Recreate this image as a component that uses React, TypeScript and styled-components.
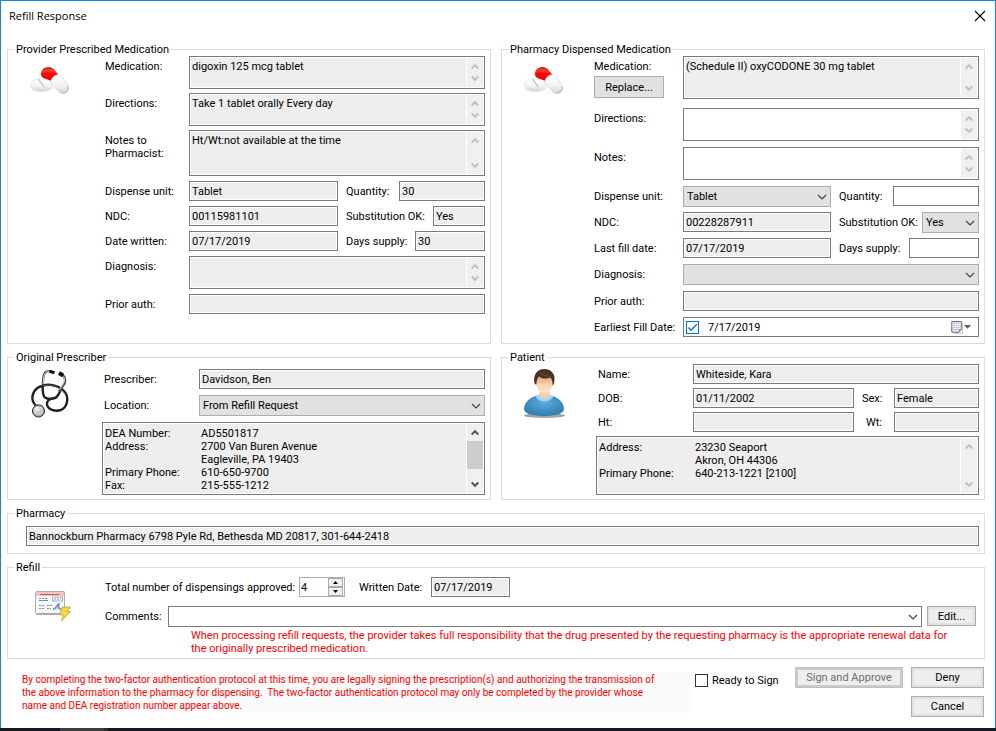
import React, { useId, useState } from "react";
import styled, { createGlobalStyle, css } from "styled-components";

const GlobalStyle = createGlobalStyle`
  *, *::before, *::after { box-sizing: border-box; }
  body { margin: 0; background: #fff; }
  body, input, select, textarea, button {
    font-family: Roboto, "Liberation Sans", Arial, sans-serif;
    font-size: 11px;
    line-height: 13px;
    color: #000;
  }
`;

const BORDER = "#7a7a7a";
const READONLY = "#eeeeee";

/* ---------- window frame ---------- */

const Page = styled.div`
  min-height: 100vh;
  display: flex;
  flex-direction: column;
`;

const Window = styled.main`
  flex: 1;
  display: flex;
  flex-direction: column;
  background: #fff;
  border: 1px solid #1883d7;
  border-bottom: 0;
`;

const TitleBar = styled.header`
  display: flex;
  align-items: center;
  justify-content: space-between;
  height: 30px;
  padding: 0 9px 0 8px;
`;

const Title = styled.h1`
  margin: 0;
  font: 400 11px/16px "Open Sans", "Noto Sans", sans-serif;
`;

const CloseButton = styled.button`
  display: flex;
  padding: 0;
  border: 0;
  background: none;
`;

const Taskbar = styled.div`
  display: flex;
  height: 3px;
  padding-left: 60px;
  background: #15181d;
`;

const TaskbarItem = styled.div`
  width: 48px;
  background: #3b3d41;
  border-right: 4px solid #2a2c30;
`;

const Body = styled.form`
  display: flex;
  flex-direction: column;
  gap: 7px;
  padding: 12px 10px 0 6px;
`;

const Columns = styled.div`
  display: grid;
  grid-template-columns: minmax(0, 1fr) minmax(0, 1fr);
  gap: 10px;
`;

/* ---------- groups and rows ---------- */

const Group = styled.fieldset<{ $pad?: string }>`
  min-width: 0;
  margin: 0;
  padding: ${(p) => p.$pad ?? "0 5px 4px 0"};
  border: 1px solid #dcdcdc;
`;

const Legend = styled.legend`
  margin-left: 6px;
  padding: 0 2px;
  line-height: 13px;
`;

const WithIcon = styled.div<{ $icon: number }>`
  display: grid;
  grid-template-columns: ${(p) => p.$icon}px minmax(0, 1fr);
`;

const IconCell = styled.div<{ $top: number }>`
  padding: ${(p) => p.$top}px 0 0 22px;
  svg { display: block; }
`;

const Stack = styled.div<{ $gap: number }>`
  display: flex;
  flex-direction: column;
  gap: ${(p) => p.$gap}px;
`;

const Row = styled.div<{ $label: number }>`
  display: grid;
  grid-template-columns: ${(p) => p.$label}px minmax(0, 1fr);
`;

const Split = styled.div<{ $side: number; $gap?: number }>`
  display: grid;
  grid-template-columns: minmax(0, 1fr) ${(p) => p.$side}px;
  column-gap: ${(p) => p.$gap ?? 8}px;
`;

const Pair = styled.div<{ $label: number }>`
  display: grid;
  grid-template-columns: ${(p) => p.$label}px minmax(0, 1fr);
`;

const Label = styled.label<{ $indent?: number }>`
  padding-top: 4px;
  padding-left: ${(p) => p.$indent ?? 0}px;
  white-space: nowrap;
`;

const LabelWithButton = styled.div`
  display: flex;
  flex-direction: column;
  align-items: flex-start;
  gap: 3px;
`;

const InlineRow = styled.div`
  display: flex;
  align-items: flex-start;
`;

const PharmacyField = styled.div`
  padding-left: 18px;
`;

/* ---------- controls ---------- */

const frame = css<{ $editable?: boolean }>`
  border: 1px solid ${BORDER};
  background: ${(p) => (p.$editable ? "#fff" : READONLY)};
  box-shadow: inset 0 0 0 1px #fff;
`;

const Input = styled.input<{ $editable?: boolean; $width?: number }>`
  ${frame}
  width: ${(p) => (p.$width ? `${p.$width}px` : "100%")};
  height: 20px;
  padding: 0 2px;
  border-radius: 0;
  outline: 0;
`;

const ScrollFrame = styled.div<{ $editable?: boolean; $height: number }>`
  ${frame}
  display: flex;
  height: ${(p) => p.$height}px;
  padding: 1px;
`;

const TextArea = styled.textarea`
  flex: 1;
  min-width: 0;
  padding: 2px 1px;
  border: 0;
  outline: 0;
  background: transparent;
  resize: none;
  overflow: hidden;
`;

const Scrollbar = styled.div`
  flex: none;
  display: flex;
  flex-direction: column;
  justify-content: space-between;
  align-items: center;
  width: 17px;
  padding: 5px 0;
  border-left: 1px solid #fff;
  background: #f0f0f0;
  svg { display: block; flex: none; }
`;

const Thumb = styled.div`
  width: 16px;
  height: 28px;
  margin: 0 0 8px;
  background: #cdcdcd;
`;

const SelectBox = styled.div`
  display: grid;
  flex: 1;
  min-width: 0;
  align-items: center;
  > * { grid-area: 1 / 1; }
  > svg { justify-self: end; margin-right: 4px; pointer-events: none; }
`;

const Select = styled.select<{ $editable?: boolean }>`
  appearance: none;
  width: 100%;
  height: 21px;
  padding: 0 20px 0 3px;
  border: 1px solid ${(p) => (p.$editable ? BORDER : "#adadad")};
  border-radius: 0;
  outline: 0;
  background: ${(p) => (p.$editable ? "#fff" : "#e1e1e1")};
`;

const Button = styled.button<{ $width?: number; $height: number; $framed?: boolean }>`
  width: ${(p) => p.$width}px;
  height: ${(p) => p.$height}px;
  padding: 0;
  border: 1px solid #adadad;
  border-radius: 0;
  background: ${(p) => (p.$framed ? "#eeeeee" : "#e1e1e1")};
  box-shadow: ${(p) => (p.$framed ? "inset 0 0 0 2px #e1e1e1" : "none")};
  white-space: nowrap;
  &:disabled {
    color: #6d6d6d;
    border-color: #bfbfbf;
    box-shadow: inset 0 0 0 2px #cccccc;
  }
`;

const CheckWrap = styled.span`
  display: grid;
  flex: none;
  place-items: center;
  > * { grid-area: 1 / 1; }
  > svg { pointer-events: none; }
`;

const CheckInput = styled.input<{ $color: string }>`
  appearance: none;
  width: 13px;
  height: 13px;
  margin: 0;
  border: 1px solid ${(p) => p.$color};
  background: #fff;
`;

const DateFrame = styled.div`
  display: flex;
  align-items: center;
  height: 20px;
  padding: 0 6px 0 2px;
  border: 1px solid ${BORDER};
  background: #fff;
`;

const DateInput = styled.input`
  flex: 1;
  min-width: 0;
  padding: 0 0 0 9px;
  border: 0;
  outline: 0;
  background: transparent;
`;

const DropButton = styled.button`
  display: flex;
  padding: 0;
  border: 0;
  background: none;
`;

const Spinner = styled.div`
  display: flex;
  width: 46px;
  height: 20px;
  padding-right: 1px;
  border: 1px solid #abadb3;
  background: #fff;
`;

const NumberInput = styled.input`
  flex: 1;
  min-width: 0;
  padding: 0 1px;
  border: 0;
  outline: 0;
  background: transparent;
  appearance: textfield;
  &::-webkit-inner-spin-button { appearance: none; margin: 0; }
`;

const SpinButtons = styled.div`
  display: grid;
  grid-template-rows: 1fr 1fr;
  width: 15px;
`;

const SpinButton = styled.button`
  display: flex;
  align-items: center;
  justify-content: center;
  padding: 0;
  border: 1px solid #acacac;
  background: #f0f0f0;
`;

const Details = styled.dl`
  flex: 1;
  display: grid;
  grid-template-columns: 96px minmax(0, 1fr);
  align-content: start;
  margin: 0;
  padding: 3px 1px 0;
  dd { margin: 0; }
`;

const Notice = styled.p<{ $indent?: number }>`
  margin: 0;
  padding: 2px 0 0 ${(p) => p.$indent ?? 0}px;
  color: #ff0000;
  white-space: nowrap;
`;

const LegalNotice = styled(Notice)`
  padding: 1px;
  font-size: 10px;
`;

const Footer = styled.footer`
  display: flex;
  align-items: flex-start;
  padding: 1px 1px 10px 14px;
`;

const Legal = styled.div`
  flex: 1;
  min-width: 0;
  margin-top: 5px;
  background: #fafafa;
`;

const ReadyLabel = styled.label`
  display: flex;
  align-items: center;
  gap: 4px;
  width: 100px;
  margin: 7px 0 0 6px;
  white-space: nowrap;
`;

const Actions = styled.div`
  display: grid;
  grid-template-columns: auto auto;
  gap: 8px;
  > :last-child { grid-column: 2; }
`;

/* ---------- drawings ---------- */

const CloseIcon = () => (
  <svg width="12" height="12" viewBox="0 0 12 12" aria-hidden="true">
    <path d="M1 1 11 11M11 1 1 11" stroke="#000" strokeWidth="1.1" fill="none" />
  </svg>
);

const Chevron = () => (
  <svg width="10" height="6" viewBox="0 0 10 6" aria-hidden="true">
    <path d="M1 1 5 5 9 1" stroke="#444" strokeWidth="1.2" fill="none" />
  </svg>
);

const ScrollArrow = ({ down, active }: { down?: boolean; active?: boolean }) => (
  <svg width="8" height="7" viewBox="0 0 8 7" aria-hidden="true">
    <path
      d={down ? "M0.7 1.5 4 4.8 7.3 1.5" : "M0.7 5.5 4 2.2 7.3 5.5"}
      stroke={active ? "#555" : "#bfbfbf"}
      strokeWidth="2"
      fill="none"
    />
  </svg>
);

const Tick = ({ color }: { color: string }) => (
  <svg width="13" height="13" viewBox="0 0 13 13" aria-hidden="true">
    <path d="M2.5 6.5 5 9.2 10.8 3.2" stroke={color} strokeWidth="1.4" fill="none" />
  </svg>
);

const Triangle = ({ down }: { down?: boolean }) => (
  <svg width="5" height="3" viewBox="0 0 5 3" aria-hidden="true">
    <path d={down ? "M0 0H5L2.5 3Z" : "M0 3H5L2.5 0Z"} fill="#000" />
  </svg>
);

const CalendarDrop = () => (
  <svg width="21" height="14" viewBox="0 0 21 14" aria-hidden="true">
    <path d="M3 13.2H11.4V3" fill="none" stroke="#c9c4c4" strokeWidth="1.2" />
    <path d="M.8 1.5H10.3V9.6L8 12.2H.8Z" fill="#f3f5f9" stroke="#75696c" strokeWidth="1" />
    <path d="M2.3 3.4H9M2.3 5.5H9M2.3 7.6H9M2.3 9.7H8" stroke="#a9b4c6" strokeWidth="1.2" strokeDasharray="1.5 .7" />
    <path d="M10.3 9.4H7.9V12.2Z" fill="#8d8184" />
    <path d="M13 5H20L16.5 8.8Z" fill="#3f608c" />
  </svg>
);

const Pills = () => {
  const id = useId();
  return (
    <svg width="40" height="30" viewBox="0 0 40 30" aria-hidden="true">
      <defs>
        <linearGradient id={`${id}w`} x1="0" y1="0" x2="0" y2="1">
          <stop offset="0" stopColor="#ffffff" />
          <stop offset=".6" stopColor="#f0f1f1" />
          <stop offset="1" stopColor="#cdd3d1" />
        </linearGradient>
        <linearGradient id={`${id}r`} x1="0" y1="0" x2="0" y2="1">
          <stop offset="0" stopColor="#c9291b" />
          <stop offset=".3" stopColor="#e8402e" />
          <stop offset=".45" stopColor="#ff0a08" />
          <stop offset="1" stopColor="#e80000" />
        </linearGradient>
      </defs>
      <path d="M1 18C1 14.500 5 12.800 11 12.800S22 14.500 22 18V20.500C22 23.800 17 25.600 11.500 25.600S1 23.800 1 20.500Z" fill={`url(#${id}w)`} stroke="#dfe5e2" strokeWidth=".8" />
      <path d="M8.500 13 14.500 21" stroke="#c4c8c8" strokeWidth="1.600" />
      <path d="M10 13 15.800 20.500" stroke="#fff" strokeWidth="1" />
      <path d="M11 8C11 3.500 14.500 1 18.500 1 21 1 23.500 2.300 25 4.500L28.800 9.500C25 9.300 22.500 11.500 21.800 15L13.500 12C11.800 11.200 11 9.700 11 8Z" fill={`url(#${id}r)`} />
      <path d="M28.500 8.800C30 8.800 31.500 9.800 32.500 11L37.500 18.500C39.500 21.500 39 24.500 36.500 26.300 34 28.200 30.500 28 28.300 25.500L21 17C20.800 12.500 24 8.800 28.500 8.800Z" fill={`url(#${id}w)`} stroke="#d3dad7" strokeWidth=".8" />
      <path d="M37.600 20.500C38.600 24 36.600 27 32.500 27.200" stroke="#bcc3c0" strokeWidth="1.200" fill="none" />
    </svg>
  );
};

const Stethoscope = () => {
  const id = useId();
  return (
    <svg width="40" height="50" viewBox="0 0 40 50" aria-hidden="true">
      <defs>
        <radialGradient id={id} cx=".4" cy=".35">
          <stop offset="0" stopColor="#f6f6f6" />
          <stop offset="1" stopColor="#a9a9a9" />
        </radialGradient>
      </defs>
      <path d="M14 17C7 17 2 23 2.400 30 2.700 33 4.500 35.500 7 37" fill="none" stroke="#1d2024" strokeWidth="2.400" />
      <path d="M12.500 16C13 21 12 26 15 28.500 18 30.500 22 30 25.500 28.500" fill="none" stroke="#1d2024" strokeWidth="2.400" />
      <path d="M13 16.500C20 14.500 31 17 35.500 24 39 30 37 38.500 31 41 25 43 18 40.500 17 35.500 16.500 31.500 19 30 25 29 28 28 29.500 24 31 20" fill="none" stroke="#1d2024" strokeWidth="2.400" />
      <path d="M14 16.500C21 15 31 18 35 25" fill="none" stroke="#70757a" strokeWidth=".7" />
      <path d="M21 2.500C16 1 13.500 4 13.200 9.500L12.800 17" fill="none" stroke="#3b3f43" strokeWidth="2.200" />
      <path d="M20 2.500C16.500 1.700 14 4.300 13.500 9.500L13.200 15" fill="none" stroke="#e4e4e4" strokeWidth=".9" />
      <path d="M32 5.500C35.500 8.500 36 11 34.500 14.500L29 22.500" fill="none" stroke="#4a4d50" strokeWidth="2.400" />
      <path d="M33.500 7.500C35 9.500 34.700 11.500 33.500 14.500L29.500 20.500" fill="none" stroke="#d9d9d9" strokeWidth="1" />
      <path d="M19.500 2.300 24.500 3.800" stroke="#111" strokeWidth="3" />
      <path d="M29 3.800 33 6.500" stroke="#111" strokeWidth="4" />
      <circle cx="8.500" cy="42" r="6" fill={`url(#${id})`} stroke="#222" strokeWidth="1" />
      <circle cx="8.500" cy="41.500" r="3.800" fill="none" stroke="#fff" strokeWidth=".6" />
      <path d="M4 36.500H12" stroke="#666" strokeWidth="1.600" />
    </svg>
  );
};

const Person = () => {
  const id = useId();
  return (
    <svg width="42" height="50" viewBox="0 0 42 50" aria-hidden="true">
      <defs>
        <linearGradient id={`${id}f`} x1="0" y1="0" x2="0" y2="1">
          <stop offset="0" stopColor="#e2a878" />
          <stop offset=".5" stopColor="#f8d5b2" />
          <stop offset="1" stopColor="#fbe6cf" />
        </linearGradient>
        <radialGradient id={`${id}b`} cx=".5" cy=".35" r=".6">
          <stop offset="0" stopColor="#5aacdc" />
          <stop offset="1" stopColor="#3580b0" />
        </radialGradient>
      </defs>
      <ellipse cx="20.500" cy="46.500" rx="20.500" ry="2.500" fill="#a3a3a3" />
      <path d="M0 40C0 33 6 28.500 13 26.500H27C34 28.500 40 33 40 40 40 45 30 47 20 47S0 45 0 40Z" fill={`url(#${id}b)`} />
      <path d="M11.500 27 15 25.500H26L29.500 27C28 31 24 32.500 20.500 32.500S13 31 11.500 27Z" fill="#9ed8fb" />
      <path d="M15.500 21H25.500V27C24 29 22 30 20.500 30S17 29 15.500 27Z" fill="#f3cfac" />
      <path d="M12 8H29V13C29 19 25.500 24 20.500 24S12 19 12 13Z" fill={`url(#${id}f)`} />
      <path d="M10.500 14C9 7 12 0 20.500 0 27 0 31 5 30.500 10 30.500 13 30 15 28.700 17 28.600 14 28.500 11 26.500 8.500 22 10.500 17 9.500 15 7.500 13 9.500 12.700 12 12.300 15.500 11.500 15.500 11 15 10.500 14Z" fill="#4b3025" />
      <path d="M16 4C20 7 24 6.500 27 8" stroke="#6b4a3b" strokeWidth="1" fill="none" />
    </svg>
  );
};

const RefillCard = () => (
  <svg width="44" height="32" viewBox="0 0 44 32" aria-hidden="true">
    <path d="M6 24H36" stroke="#8d9092" strokeWidth="1.500" />
    <rect x="5.500" y="1.500" width="29" height="22" rx="1" fill="#f6f9fc" stroke="#a9acb0" />
    <path d="M6 2H34V6H6Z" fill="#f8c3ba" />
    <path d="M10 4.500H29" stroke="#a66d68" strokeWidth="1" />
    <path d="M9 8.500H18M9 15.500H14M9 18.500H14M17 15.500H22M17 18.500H21" stroke="#84888c" strokeWidth="1" strokeDasharray="2 1" />
    <path d="M9 10.500H18" stroke="#84888c" strokeWidth="1" />
    <rect x="22.500" y="7" width="10" height="4" fill="#fff" stroke="#a6b0ba" />
    <path d="M24 9H31" stroke="#84888c" strokeDasharray="2 1" />
    <path d="M23 19.500C26 18.500 27 15 29 14 29 17 27 18.500 33 19.500" stroke="#6d8cae" strokeWidth="1.400" fill="#c5d6e6" />
    <path d="M32.500 17H40.500L37 21.500H40.500L31.500 31 33.200 25H29.500Z" fill="#f2dc3e" stroke="#b99e2c" strokeWidth=".8" />
  </svg>
);

/* ---------- composed fields ---------- */

type TextRowProps = {
  label: React.ReactNode;
  labelWidth: number;
  value?: string;
  height?: number;
  editable?: boolean;
  indent?: number;
  action?: React.ReactNode;
};

const ScrollArrows = () => (
  <Scrollbar aria-hidden="true">
    <ScrollArrow />
    <ScrollArrow down />
  </Scrollbar>
);

function AreaRow({ label, labelWidth, value = "", height = 33, editable, action }: TextRowProps) {
  const id = useId();
  return (
    <Row $label={labelWidth}>
      <LabelWithButton>
        <Label htmlFor={id}>{label}</Label>
        {action}
      </LabelWithButton>
      <ScrollFrame $height={height} $editable={editable}>
        <TextArea id={id} defaultValue={value} readOnly={!editable} />
        <ScrollArrows />
      </ScrollFrame>
    </Row>
  );
}

function InputRow({ label, labelWidth, value = "", editable, indent }: TextRowProps) {
  const id = useId();
  return (
    <Row $label={labelWidth}>
      <Label htmlFor={id} $indent={indent}>{label}</Label>
      <Input id={id} defaultValue={value} readOnly={!editable} $editable={editable} />
    </Row>
  );
}

function SelectField({ id, options, editable }: { id: string; options: string[]; editable?: boolean }) {
  return (
    <SelectBox>
      <Select id={id} defaultValue={options[0]} $editable={editable}>
        {options.map((o) => (
          <option key={o}>{o}</option>
        ))}
      </Select>
      <Chevron />
    </SelectBox>
  );
}

function SelectRow({ label, labelWidth, options, indent }: { label: string; labelWidth: number; options: string[]; indent?: number }) {
  const id = useId();
  return (
    <Row $label={labelWidth}>
      <Label htmlFor={id} $indent={indent}>{label}</Label>
      <SelectField id={id} options={options} />
    </Row>
  );
}

type Cell = { label: string; value?: string; options?: string[]; editable?: boolean; width?: number; indent?: number };

function CellControl({ id, cell }: { id: string; cell: Cell }) {
  return cell.options ? (
    <SelectField id={id} options={cell.options} />
  ) : (
    <Input id={id} defaultValue={cell.value ?? ""} readOnly={!cell.editable} $editable={cell.editable} />
  );
}

function SplitRow({ labelWidth, side, main, extra }: { labelWidth: number; side: number; main: Cell; extra: Cell }) {
  const a = useId();
  const b = useId();
  return (
    <Row $label={labelWidth}>
      <Label htmlFor={a} $indent={main.indent}>{main.label}</Label>
      <Split $side={side}>
        <CellControl id={a} cell={main} />
        <Pair $label={extra.width ?? 32}>
          <Label htmlFor={b} $indent={extra.indent}>{extra.label}</Label>
          <CellControl id={b} cell={extra} />
        </Pair>
      </Split>
    </Row>
  );
}

function CheckBox({ id, checked, onChange, color, label }: { id?: string; checked: boolean; onChange: (v: boolean) => void; color: string; label?: string }) {
  return (
    <CheckWrap>
      <CheckInput id={id} type="checkbox" aria-label={label} checked={checked} $color={color} onChange={(e) => onChange(e.target.checked)} />
      {checked && <Tick color={color} />}
    </CheckWrap>
  );
}

function DetailLines({ lines }: { lines: [string, string][] }) {
  return (
    <Details>
      {lines.map(([term, value]) => (
        <React.Fragment key={value}>
          <dt>{term}</dt>
          <dd>{value}</dd>
        </React.Fragment>
      ))}
    </Details>
  );
}

/* ---------- panels ---------- */

function PrescribedPanel() {
  const w = 84;
  return (
    <Group $pad="0 5px 6px 0">
      <Legend>Provider Prescribed Medication</Legend>
      <WithIcon $icon={97}>
        <IconCell $top={10}><Pills /></IconCell>
        <Stack $gap={5}>
          <Stack $gap={4}>
            <AreaRow label="Medication:" labelWidth={w} value="digoxin 125 mcg tablet" />
            <AreaRow label="Directions:" labelWidth={w} value="Take 1 tablet orally Every day" />
            <AreaRow label={<>Notes to<br />Pharmacist:</>} labelWidth={w} height={46} value="Ht/Wt:not available at the time" />
          </Stack>
          <SplitRow labelWidth={w} side={139} main={{ label: "Dispense unit:", value: "Tablet" }} extra={{ label: "Quantity:", value: "30", width: 53 }} />
          <SplitRow labelWidth={w} side={139} main={{ label: "NDC:", value: "00115981101" }} extra={{ label: "Substitution OK:", value: "Yes", width: 87 }} />
          <SplitRow labelWidth={w} side={139} main={{ label: "Date written:", value: "07/17/2019" }} extra={{ label: "Days supply:", value: "30", width: 69 }} />
          <AreaRow label="Diagnosis:" labelWidth={w} />
          <InputRow label="Prior auth:" labelWidth={w} />
        </Stack>
      </WithIcon>
    </Group>
  );
}

function DispensedPanel() {
  const w = 89;
  const dateId = useId();
  const [dated, setDated] = useState(true);
  return (
    <Group $pad="0 5px 6px 0">
      <Legend>Pharmacy Dispensed Medication</Legend>
      <WithIcon $icon={92}>
        <IconCell $top={10}><Pills /></IconCell>
        <Stack $gap={9}>
          <AreaRow
            label="Medication:"
            labelWidth={w}
            height={43}
            value="(Schedule II) oxyCODONE 30 mg tablet"
            action={<Button type="button" $width={70} $height={22}>Replace...</Button>}
          />
          <Stack $gap={6}>
            <AreaRow label="Directions:" labelWidth={w} editable />
            <AreaRow label="Notes:" labelWidth={w} editable />
            <Stack $gap={5}>
              <SplitRow labelWidth={w} side={140} main={{ label: "Dispense unit:", options: ["Tablet"] }} extra={{ label: "Quantity:", editable: true, width: 54 }} />
              <SplitRow labelWidth={w} side={140} main={{ label: "NDC:", value: "00228287911" }} extra={{ label: "Substitution OK:", options: ["Yes", "No"], width: 83 }} />
              <SplitRow labelWidth={w} side={140} main={{ label: "Last fill date:", value: "07/17/2019" }} extra={{ label: "Days supply:", editable: true, width: 70 }} />
            </Stack>
            <SelectRow label="Diagnosis:" labelWidth={w} options={[""]} />
            <InputRow label="Prior auth:" labelWidth={w} />
            <Row $label={w}>
              <Label htmlFor={dateId}>Earliest Fill Date:</Label>
              <DateFrame>
                <CheckBox checked={dated} onChange={setDated} color="#0078d7" label="Use earliest fill date" />
                <DateInput id={dateId} defaultValue="7/17/2019" />
                <DropButton type="button" aria-label="Open calendar"><CalendarDrop /></DropButton>
              </DateFrame>
            </Row>
          </Stack>
        </Stack>
      </WithIcon>
    </Group>
  );
}

function PrescriberPanel() {
  return (
    <Group $pad="5px 5px 4px 0">
      <Legend>Original Prescriber</Legend>
      <WithIcon $icon={94}>
        <IconCell $top={0}><Stethoscope /></IconCell>
        <Stack $gap={6}>
          <InputRow label="Prescriber:" labelWidth={97} indent={2} value="Davidson, Ben" />
          <SelectRow label="Location:" labelWidth={97} indent={2} options={["From Refill Request"]} />
          <ScrollFrame $height={73}>
            <DetailLines
              lines={[
                ["DEA Number:", "AD5501817"],
                ["Address:", "2700 Van Buren Avenue"],
                ["", "Eagleville, PA 19403"],
                ["Primary Phone:", "610-650-9700"],
                ["Fax:", "215-555-1212"],
              ]}
            />
            <Scrollbar aria-hidden="true">
              <ScrollArrow active />
              <Thumb />
              <ScrollArrow down active />
            </Scrollbar>
          </ScrollFrame>
        </Stack>
      </WithIcon>
    </Group>
  );
}

function PatientPanel() {
  return (
    <Group>
      <Legend>Patient</Legend>
      <WithIcon $icon={94}>
        <IconCell $top={5}><Person /></IconCell>
        <Stack $gap={4}>
          <InputRow label="Name:" labelWidth={97} indent={2} value="Whiteside, Kara" />
          <SplitRow labelWidth={97} side={117} main={{ label: "DOB:", value: "01/11/2002", indent: 2 }} extra={{ label: "Sex:", value: "Female" }} />
          <SplitRow labelWidth={97} side={117} main={{ label: "Ht:", indent: 2 }} extra={{ label: "Wt:", indent: 4 }} />
          <ScrollFrame $height={59}>
            <DetailLines
              lines={[
                ["Address:", "23230 Seaport"],
                ["", "Akron, OH 44306"],
                ["Primary Phone:", "640-213-1221 [2100]"],
              ]}
            />
            <ScrollArrows />
          </ScrollFrame>
        </Stack>
      </WithIcon>
    </Group>
  );
}

function RefillPanel() {
  const countId = useId();
  const writtenId = useId();
  const commentsId = useId();
  const [count, setCount] = useState(4);
  return (
    <Group $pad="3px 8px 3px 0">
      <Legend>Refill</Legend>
      <WithIcon $icon={97}>
        <IconCell $top={13}><RefillCard /></IconCell>
        <Stack $gap={9}>
          <InlineRow>
            <Row $label={194}>
              <Label htmlFor={countId}>Total number of dispensings approved:</Label>
              <Spinner>
                <NumberInput id={countId} type="number" value={count} onChange={(e) => setCount(Number(e.target.value))} />
                <SpinButtons>
                  <SpinButton type="button" aria-label="Increase" onClick={() => setCount(count + 1)}><Triangle /></SpinButton>
                  <SpinButton type="button" aria-label="Decrease" onClick={() => setCount(count - 1)}><Triangle down /></SpinButton>
                </SpinButtons>
              </Spinner>
            </Row>
            <Row $label={86}>
              <Label htmlFor={writtenId} $indent={14}>Written Date:</Label>
              <Input id={writtenId} defaultValue="07/17/2019" readOnly $width={79} />
            </Row>
          </InlineRow>
          <div>
            <Row $label={63}>
              <Label htmlFor={commentsId}>Comments:</Label>
              <Split $side={49} $gap={5}>
                <SelectField id={commentsId} options={[""]} editable />
                <Button type="button" $width={49} $height={20} $framed>Edit...</Button>
              </Split>
            </Row>
            <Notice $indent={86}>
              When processing refill requests, the provider takes full responsibility that the drug presented by the requesting pharmacy is the appropriate renewal data for<br />
              the originally prescribed medication.
            </Notice>
          </div>
        </Stack>
      </WithIcon>
    </Group>
  );
}

export default function App() {
  const [ready, setReady] = useState(false);
  return (
    <Page>
      <GlobalStyle />
      <Window>
        <TitleBar>
          <Title>Refill Response</Title>
          <CloseButton type="button" aria-label="Close"><CloseIcon /></CloseButton>
        </TitleBar>
        <Body onSubmit={(e) => e.preventDefault()}>
          <Columns>
            <PrescribedPanel />
            <DispensedPanel />
          </Columns>
          <Columns>
            <PrescriberPanel />
            <PatientPanel />
          </Columns>
          <Group $pad="6px 5px 7px 0">
            <Legend>Pharmacy</Legend>
            <PharmacyField>
              <Input aria-label="Pharmacy" readOnly defaultValue="Bannockburn Pharmacy 6798 Pyle Rd, Bethesda MD 20817, 301-644-2418" />
            </PharmacyField>
          </Group>
          <RefillPanel />
          <Footer>
            <Legal>
              <LegalNotice>
                By completing the two-factor authentication protocol at this time, you are legally signing the prescription(s) and authorizing the transmission of<br />
                the above information to the pharmacy for dispensing.&nbsp; The two-factor authentication protocol may only be completed by the provider whose<br />
                name and DEA registration number appear above.
              </LegalNotice>
            </Legal>
            <ReadyLabel>
              <CheckBox checked={ready} onChange={setReady} color="#333" />
              Ready to Sign
            </ReadyLabel>
            <Actions>
              <Button type="button" disabled={!ready} $width={108} $height={21} $framed>Sign and Approve</Button>
              <Button type="button" $width={73} $height={21} $framed>Deny</Button>
              <Button type="button" $width={73} $height={21} $framed>Cancel</Button>
            </Actions>
          </Footer>
        </Body>
      </Window>
      <Taskbar><TaskbarItem /></Taskbar>
    </Page>
  );
}
